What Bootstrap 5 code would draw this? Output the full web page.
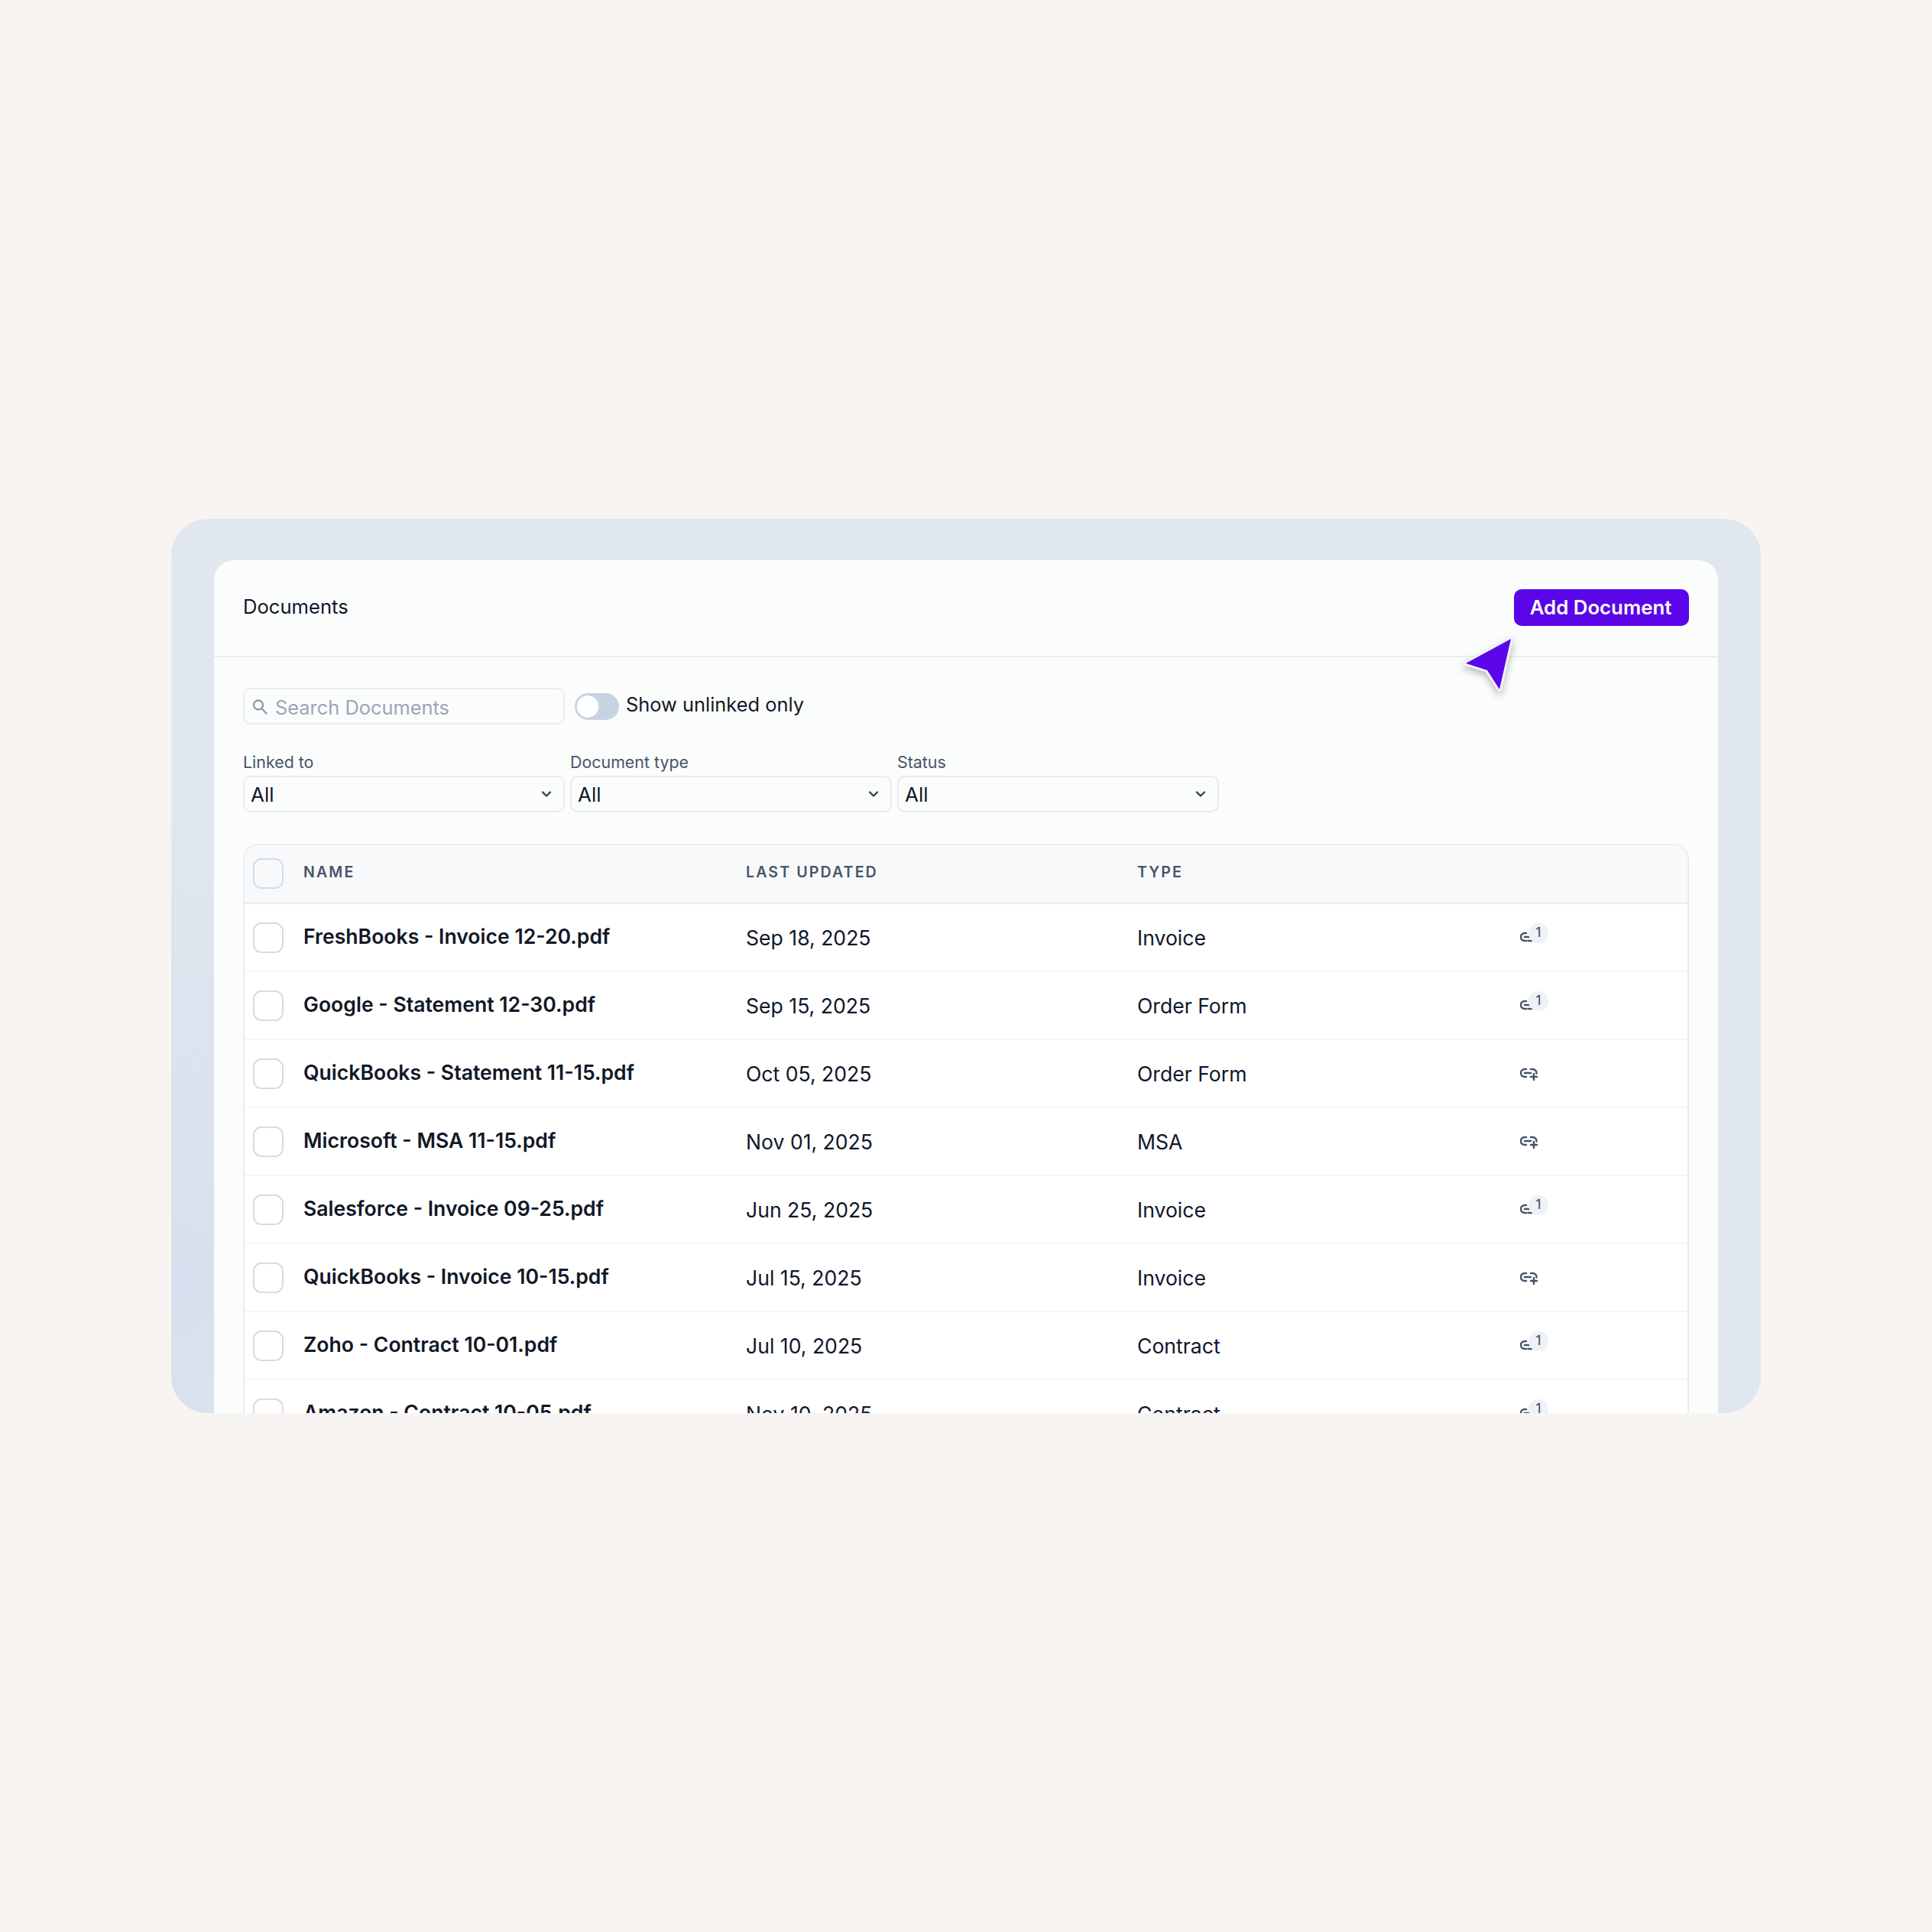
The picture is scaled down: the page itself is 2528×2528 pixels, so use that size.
<!DOCTYPE html>
<html lang="en">
<head>
<meta charset="utf-8">
<title>Documents</title>
<link href="https://cdn.jsdelivr.net/npm/bootstrap@5.3.0/dist/css/bootstrap.min.css" rel="stylesheet">
<style>
body{background:#f7f4f1;font-family:Inter,"Liberation Sans",sans-serif;color:#0f172a;margin:0;height:2528px;padding:679px 224px 0}
.stage{position:relative;height:1170px;overflow:hidden;border-radius:48px;background:radial-gradient(ellipse 500px 600px at 0 85%,#d8dfee 0%,#e1e7ef 100%);padding:54px 56px 0}
.sheet{background:#fbfcfc;border-radius:26px 26px 0 0;height:1200px}
.sheet-head{height:127px;padding:0 38px;border-bottom:2px solid #e9edf2;display:flex;justify-content:space-between;align-items:flex-start}
.sheet-title{font-size:25.6px;line-height:32px;margin-top:45px;font-weight:400}
.add-btn{width:229px;height:48px;margin-top:38px;padding:0 2px 0 0;background:#5b06e8;border:0;border-radius:10px;color:#fff;font-size:25.8px;line-height:48px;font-weight:600}
.add-btn:hover{background:#5b06e8;color:#fff}
.sheet-body{padding:40px 38px 0}
.search-box{position:relative;width:421px;height:48px}
.search-box svg{position:absolute;left:11px;top:14px}
.search-input{height:48px;padding:3px 10px 0 40px;font-size:25.4px;line-height:44px;border:2px solid #e7ebf1;border-radius:10px;background:#fbfcfc;color:#0f172a}
.search-input::placeholder{color:#9aa6b8;opacity:1}
.toggle-row{margin:0 0 0 13px;gap:9px;padding:0;min-height:0;display:flex;align-items:center}
.toggle-row .form-check-input{width:58px;height:35px;margin:0;float:none;border-radius:18px;background-color:#c7d3e1;border:2px solid #c7d3e1;background-image:radial-gradient(circle at 15px 50%,#fff 0,#fff 14px,transparent 14.5px);background-size:auto;background-position:0 0}
.toggle-row .form-check-label{font-size:25.4px;line-height:32px;margin-top:-5px;color:#111827}
.filters{margin-top:35px;display:grid;grid-template-columns:repeat(3,421px);column-gap:7px;width:fit-content}
.filters .form-label{font-size:21.4px;line-height:28px;color:#475569;margin:0 0 4px;display:block}
.filters .form-select{height:48px;font-size:26px;line-height:44px;padding:1px 40px 0 8px;color:#0f172a;border:2px solid #e7ebf1;border-radius:10px;background-color:#fbfcfc;background-size:22px 22px;background-position:right 11px center;background-image:url("data:image/svg+xml,%3csvg xmlns='http://www.w3.org/2000/svg' viewBox='0 0 22 22'%3e%3cpath fill='none' stroke='%23334155' stroke-width='2.4' stroke-linecap='round' stroke-linejoin='round' d='M6 8.500l5 5 5-5'/%3e%3c/svg%3e")}
.doc-wrap{margin-top:41px;width:1892px;border:2px solid #e9edf2;border-bottom:0;border-radius:20px 20px 0 0;overflow:hidden;background:#fff}
.doc-table{table-layout:fixed;width:100%;margin:0;--bs-table-bg:transparent;--bs-table-color:#0f172a}
.doc-table th{height:76px;padding:0;background:#f8f9fb;font-size:19.6px;font-weight:600;letter-spacing:2.1px;color:#475569;border-bottom:2px solid #e9edf2;vertical-align:middle}
.doc-table td{height:89px;padding:0;font-size:26.6px;vertical-align:middle;border-bottom:2px solid #f5f6f8;line-height:34px}
.doc-table th span{position:relative;top:-2px}
.doc-table .fname{font-weight:600;font-size:26.6px;color:#111827;position:relative;top:-2px;display:block}
.doc-table .ck{padding-left:11px}
.box{display:block;width:40px;height:40px;border:2px solid #d5dce6;border-radius:11px;background:#fff}
.doc-table th .box{background:#f8f9fb;top:-1px}
.link-cell{position:relative;display:block;width:44px;height:36px}
.link-cell svg{position:absolute;left:0;top:9px}
.cnt{position:absolute;left:11px;top:-1px;width:26px;height:26px;border-radius:50%;background:#eef1f6;color:#334155;font-size:17px;font-weight:400;line-height:25px;text-align:center}
.pointer{position:absolute;left:1687px;top:151px;filter:drop-shadow(0 5px 5px rgba(15,23,42,.28))}
.pointer path{paint-order:stroke}
</style>
</head>
<body>
<div class="stage">
  <div class="sheet">
    <div class="sheet-head">
      <div class="sheet-title">Documents</div>
      <button type="button" class="btn add-btn">Add Document</button>
    </div>
    <div class="sheet-body">
      <div class="d-flex align-items-center">
        <div class="search-box">
          <svg width="22" height="22" viewBox="0 0 22 22" fill="none" stroke="#8e9bad" stroke-width="2.4" stroke-linecap="round"><circle cx="9" cy="8.500" r="6"/><path d="M13.500 13l6 6.500"/></svg>
          <input class="form-control search-input" type="text" placeholder="Search Documents">
        </div>
        <div class="form-check form-switch toggle-row">
          <input class="form-check-input" type="checkbox" role="switch" id="unl">
          <label class="form-check-label" for="unl">Show unlinked only</label>
        </div>
      </div>
      <div class="filters">
        <div><label class="form-label">Linked to</label><select class="form-select"><option>All</option></select></div>
        <div><label class="form-label">Document type</label><select class="form-select"><option>All</option></select></div>
        <div><label class="form-label">Status</label><select class="form-select"><option>All</option></select></div>
      </div>
      <div class="doc-wrap">
        <table class="table doc-table">
          <colgroup><col style="width:77px"><col style="width:579px"><col style="width:512px"><col style="width:501px"><col></colgroup>
          <thead><tr><th class="ck"><span class="box"></span></th><th><span>NAME</span></th><th><span>LAST UPDATED</span></th><th><span>TYPE</span></th><th></th></tr></thead>
          <tbody id="rows"></tbody>
        </table>
      </div>
    </div>
  </div>
  <svg class="pointer" width="76" height="84" viewBox="0 0 76 84"><path d="M66 6 L7 38 L35 47 L51 72 Z" fill="#5b06e8" stroke="#f1f3f8" stroke-width="6" stroke-linejoin="round"/></svg>
</div>
<script>
const linked='<svg width="26" height="18" viewBox="0 0 26 18" fill="none" stroke="#475569" stroke-width="2.500" stroke-linecap="round"><path d="M8 3H6a5 5 0 0 0 0 10h2"/><path d="M6 8h6"/><path d="M10.500 13h5"/></svg><span class="cnt">1</span>';
const unlinked='<svg width="26" height="18" viewBox="0 0 26 18" fill="none" stroke="#475569" stroke-width="2.500" stroke-linecap="round"><path d="M8 3H6a5 5 0 0 0 0 10h2"/><path d="M6 8h8"/><path d="M14 3h3a5 5 0 0 1 4.500 5.500"/><path d="M18 9v8M14 13h8"/></svg>';
const data=[["FreshBooks - Invoice 12-20.pdf","Sep 18, 2025","Invoice",1],["Google - Statement 12-30.pdf","Sep 15, 2025","Order Form",1],["QuickBooks - Statement 11-15.pdf","Oct 05, 2025","Order Form",0],["Microsoft - MSA 11-15.pdf","Nov 01, 2025","MSA",0],["Salesforce - Invoice 09-25.pdf","Jun 25, 2025","Invoice",1],["QuickBooks - Invoice 10-15.pdf","Jul 15, 2025","Invoice",0],["Zoho - Contract 10-01.pdf","Jul 10, 2025","Contract",1],["Amazon - Contract 10-05.pdf","Nov 10, 2025","Contract",1]];
document.getElementById('rows').innerHTML=data.map(r=>`<tr><td class="ck"><span class="box"></span></td><td><span class="fname">${r[0]}</span></td><td>${r[1]}</td><td>${r[2]}</td><td><span class="link-cell">${r[3]?linked:unlinked}</span></td></tr>`).join('');
</script>
<script src="https://cdn.jsdelivr.net/npm/bootstrap@5.3.0/dist/js/bootstrap.bundle.min.js"></script>
</body>
</html>
